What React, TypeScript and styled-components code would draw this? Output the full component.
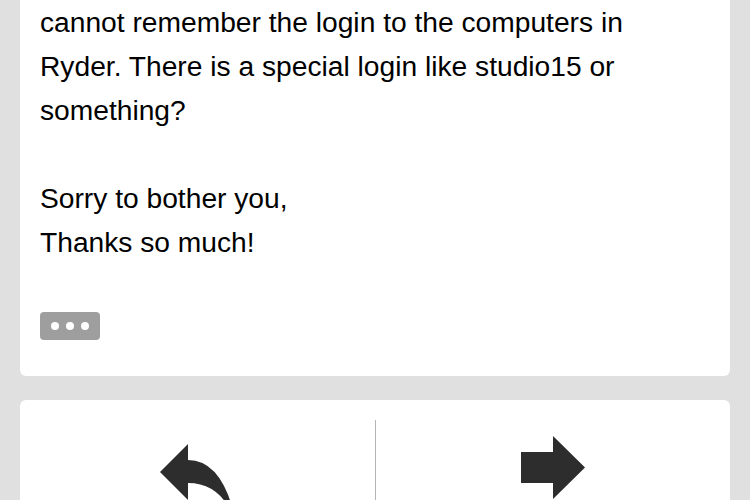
import React from "react";
import styled, { createGlobalStyle } from "styled-components";

const Global = createGlobalStyle`
  html, body { margin: 0; padding: 0; background: #e0e0e0; overflow: hidden; }
  body { font-family: "Liberation Sans", Arial, Helvetica, sans-serif; }
`;

const Page = styled.div`
  padding: 0 20px;
  display: flex;
  flex-direction: column;
  gap: 24px;
`;

const MessageCard = styled.div`
  background: #fff;
  border-radius: 0 0 6px 6px;
  padding: 0 20px 36px;
`;

const Body = styled.div`
  font-size: 28.2px;
  line-height: 44px;
  color: #000;
`;

const Line = styled.div`
  min-height: 44px;
  white-space: nowrap;
`;

const MoreButton = styled.button`
  margin-top: 48px;
  width: 60px;
  height: 28px;
  border: none;
  border-radius: 4px;
  background: #9e9e9e;
  display: flex;
  align-items: center;
  justify-content: center;
  gap: 7px;
  padding: 0;
`;

const Dot = styled.span`
  width: 8px;
  height: 8px;
  border-radius: 50%;
  background: #fff;
`;

const ActionCard = styled.div`
  background: #fff;
  border-radius: 6px 6px 0 0;
  padding: 20px 0;
  display: grid;
  grid-template-columns: 1fr 1px 1fr;
  height: 120px;
`;

const Action = styled.div<{ $pad: number }>`
  display: flex;
  justify-content: center;
  align-items: flex-start;
  padding-top: ${(p) => p.$pad}px;
`;

const Divider = styled.div`
  background: #b4b4b4;
`;

const ReplyIcon = () => (
  <svg width="74" height="80" viewBox="0 0 74 80">
    <path
      d="M0 32 L28 4 L28 20 Q58 20 72 66 L68 66 Q54 43 28 43 L28 60 Z"
      fill="#2d2d2d"
    />
  </svg>
);

const ForwardIcon = () => (
  <svg width="64" height="64" viewBox="0 0 64 64">
    <path d="M0 16 L32 16 L32 0 L64 31.5 L32 63 L32 47 L0 47 Z" fill="#2d2d2d" />
  </svg>
);

export default function App() {
  return (
    <>
      <Global />
      <Page>
        <MessageCard>
          <Body>
            <Line>cannot remember the login to the computers in</Line>
            <Line>Ryder. There is a special login like studio15 or</Line>
            <Line>something?</Line>
            <Line />
            <Line>Sorry to bother you,</Line>
            <Line>Thanks so much!</Line>
          </Body>
          <MoreButton aria-label="more">
            <Dot />
            <Dot />
            <Dot />
          </MoreButton>
        </MessageCard>
        <ActionCard>
          <Action $pad={20}>
            <ReplyIcon />
          </Action>
          <Divider />
          <Action $pad={16}>
            <ForwardIcon />
          </Action>
        </ActionCard>
      </Page>
    </>
  );
}
